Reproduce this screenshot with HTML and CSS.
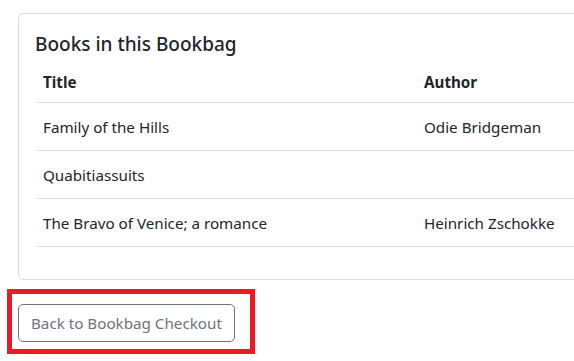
FILE: index.html
```html
<!DOCTYPE html>
<html lang="en">
<head>
<meta charset="utf-8">
<title>Bookbag</title>
<link rel="stylesheet" href="styles.css">
</head>
<body>
<div class="page">
  <div class="card">
    <h5 class="card-title">Books in this Bookbag</h5>
    <table class="books">
      <thead>
        <tr><th class="col-title">Title</th><th>Author</th></tr>
      </thead>
      <tbody>
        <tr><td>Family of the Hills</td><td>Odie Bridgeman</td></tr>
        <tr><td>Quabitiassuits</td><td></td></tr>
        <tr><td>The Bravo of Venice; a romance</td><td>Heinrich Zschokke</td></tr>
      </tbody>
    </table>
  </div>
  <div class="actions">
    <button class="btn-outline">Back to Bookbag Checkout</button>
  </div>
  <div class="highlight"></div>
</div>
</body>
</html>
```

FILE: styles.css
```css
html {
  overflow: hidden;
}
body {
  margin: 0;
  padding: 0;
  background: #fff;
  font-family: "Noto Sans", "Open Sans", sans-serif;
  font-size: 15.2px;
  line-height: 24px;
  color: #212529;
}
.page {
  position: relative;
  padding: 13px 0 19px 18px;
  width: 800px;
}
.card {
  width: 680px;
  border: 1px solid #dcdcdc;
  border-radius: 5px;
  padding: 18px 16px 16px;
}
.card-title {
  margin: 0 0 6px 0;
  font-size: 19px;
  line-height: 24px;
  font-weight: 500;
}
.books {
  width: 100%;
  border-collapse: collapse;
  margin-bottom: 16px;
}
.books th {
  text-align: left;
  font-weight: 700;
  padding: 8px;
  border-bottom: 1px solid #dee2e6;
}
.books .col-title {
  width: 365px;
}
.books td {
  padding: 12px 8px 11px;
  border-bottom: 1px solid #dee2e6;
  height: 24px;
}
.actions {
  margin-top: 24px;
}
.btn-outline {
  font-family: inherit;
  font-size: 15.2px;
  line-height: 24px;
  color: #6c757d;
  background: #fff;
  border: 1px solid #6c757d;
  border-radius: 5px;
  padding: 6px 12px;
}
.highlight {
  position: absolute;
  left: 7px;
  top: 289px;
  width: 248px;
  height: 65px;
  box-sizing: border-box;
  border: 5px solid #e81c24;
}
```
